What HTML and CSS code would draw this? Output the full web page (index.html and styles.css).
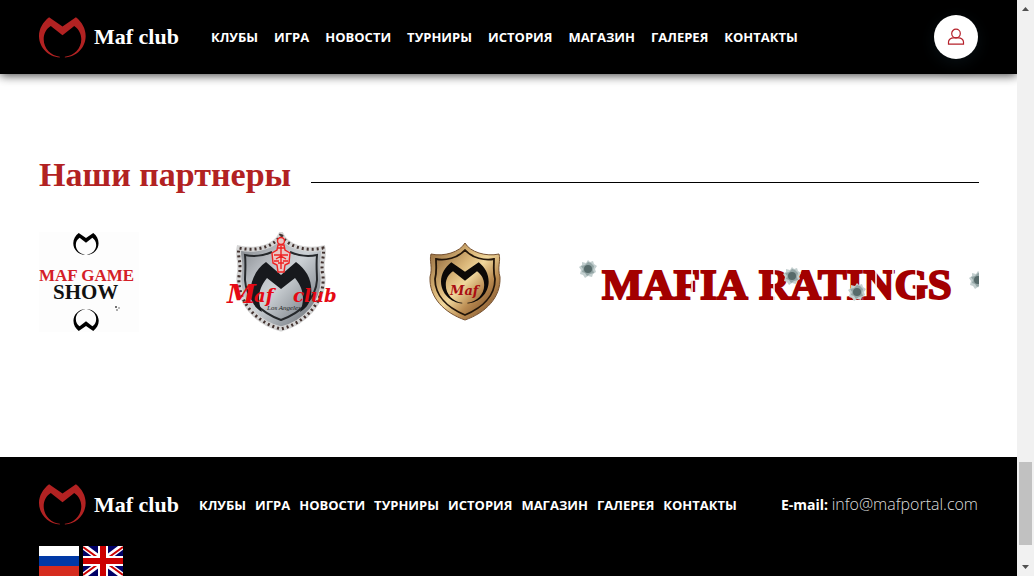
FILE: index.html
```html
<!DOCTYPE html>
<html lang="ru">
<head>
<meta charset="utf-8">
<title>Maf club</title>
<link rel="stylesheet" href="styles.css">
</head>
<body>
<svg class="defs" aria-hidden="true">
  <defs>
    <symbol id="mask" viewBox="0 0 140 121">
      <path d="M30 0L70 28L110 0C128 14 139 34 139 56C139 90 112 118 77 120V118C104 115 126 94 126 66C126 49 118 35 105 26L70 54L35 26C21 35 14 49 14 66C14 94 36 115 62 118V120C28 118 0 90 0 56C0 34 12 14 30 0Z"/>
    </symbol>
    <symbol id="hole" viewBox="0 0 18 18">
      <path d="M9 0L11 2L14 1L15 4L18 6L16 9L17 12L14 14L13 17L9 16L6 18L4 15L1 14L2 10L0 7L3 5L3 2L7 3Z" fill="#c3cfcf"/>
      <path d="M9 2L12 3L15 6L14 10L15 13L11 14L8 16L6 13L3 12L4 9L2 6L6 5Z" fill="#93a5a5"/>
      <circle cx="9" cy="9" r="4" fill="#566a6a"/>
    </symbol>
    <linearGradient id="steel" x1="0" y1="0" x2="1" y2="1">
      <stop offset="0" stop-color="#73777c"/><stop offset=".3" stop-color="#b5b9be"/><stop offset=".5" stop-color="#cdd2d6"/><stop offset=".75" stop-color="#92989e"/><stop offset="1" stop-color="#55585c"/>
    </linearGradient>
    <linearGradient id="gold" x1="0" y1="0" x2="1" y2="1">
      <stop offset="0" stop-color="#8a6238"/><stop offset=".35" stop-color="#d9b577"/><stop offset=".5" stop-color="#f0d79c"/><stop offset=".7" stop-color="#b98a50"/><stop offset="1" stop-color="#6b4020"/>
    </linearGradient>
  </defs>
</svg>
<div class="page">
  <header class="header">
    <a class="brand" href="#"><svg class="brand-mark" aria-hidden="true"><use href="#mask"/></svg><span>Maf club</span></a>
    <nav class="nav">
      <a href="#">КЛУБЫ</a><a href="#">ИГРА</a><a href="#">НОВОСТИ</a><a href="#">ТУРНИРЫ</a><a href="#">ИСТОРИЯ</a><a href="#">МАГАЗИН</a><a href="#">ГАЛЕРЕЯ</a><a href="#">КОНТАКТЫ</a>
    </nav>
    <button class="account" type="button" aria-label="Профиль">
      <svg width="18" height="18" viewBox="0 0 18 18" fill="none" stroke="#b5202a" stroke-width="1.2"><circle cx="9" cy="5.5" r="4.3"/><path d="M1.5 16.2V14C1.500 11.500 4 9.800 6.500 9.800H11.500C14 9.800 16.500 11.500 16.500 14V16.200Z"/></svg>
    </button>
  </header>
  <main class="partners">
    <div class="title-row"><h2>Наши партнеры</h2><span class="rule"></span></div>
    <div class="logos">
      <a href="#" aria-label="Maf Game Show"><svg width="100" height="100" viewBox="0 0 100 100">
        <rect width="100" height="100" fill="#fdfdfd"/>
        <use href="#mask" x="34" y="1" width="26" height="22"/>
        <g transform="rotate(180 47 88)"><use href="#mask" x="34" y="77" width="26" height="22"/></g>
        <text class="game" x="0" y="49">MAF GAME</text>
        <text class="show" x="14" y="67">SHOW</text>
        <g fill="#444"><circle cx="77" cy="75" r="1"/><circle cx="80" cy="76" r=".7"/><circle cx="78" cy="78" r=".8"/></g>
      </svg></a>
      <a href="#" aria-label="Maf club Los Angeles"><svg width="140" height="100" viewBox="0 0 140 100">
        <path d="M70 2C65 14 47 20 28 16C26 25 31 30 28 44C26 70 46 91 70 97C94 91 114 70 112 44C109 30 114 25 112 16C93 20 75 14 70 2Z" fill="url(#steel)" stroke="#d5d5d5" stroke-width="5"/>
        <path d="M70 2C65 14 47 20 28 16C26 25 31 30 28 44C26 70 46 91 70 97C94 91 114 70 112 44C109 30 114 25 112 16C93 20 75 14 70 2Z" fill="none" stroke="#42322f" stroke-width="3" stroke-dasharray="2 3"/>
        <path d="M61 20C52 24 42 25 34 23C35 34 34 41 34 48C35 67 51 81 70 88C89 81 105 67 106 48C106 41 105 34 106 23C98 25 88 24 79 20" fill="none" stroke="#25282b" stroke-width="2"/>
        <path d="M55 30L70 43L85 30C96 38 102 49 100 65C98 73 94 77 89 80C94 68 93 57 84 46L70 57L56 46C47 57 46 68 51 80C44 76 40 70 39 60C40 48 45 37 55 30Z" fill="#17191d"/>
        <g fill="#e9c8c5" stroke="#e22" stroke-width="1.400"><circle cx="70" cy="9" r="3.500"/><path d="M67 13H73L74 18L79 21L78 31L74 33L73 40H67L66 33L62 31L61 21L66 18Z"/><path d="M67 16H73M63 23H77M65 27L70 24L75 27M67 31H73M70 14V37M63 29L68 29M72 29L77 29" fill="none"/></g>
        <text class="script big" x="16" y="71">M</text>
        <text class="script word" x="43" y="70">af</text><text class="script word" x="82" y="70">club</text>
        <text class="city" x="56" y="78">Los Angeles</text>
      </svg></a>
      <a href="#" aria-label="Maf"><svg width="84" height="100" viewBox="0 0 84 100">
        <path d="M42 11C37 20 21 25 8 22C6 29 10 35 7 45C6 66 22 81 42 88C62 81 78 66 77 45C74 35 78 29 76 22C63 25 47 20 42 11Z" fill="url(#gold)" stroke="#75502f"/>
        <path d="M42 18C35 26 22 29 13 27C13 35 14 40 12 47C12 64 25 76 42 83C59 76 72 64 72 47C70 40 71 35 71 27C62 29 49 26 42 18Z" fill="url(#gold)" stroke="#221509" stroke-width="1.800"/>
        <use href="#mask" x="18" y="30" width="48" height="42" fill="#0c0907"/>
        <text class="script small" x="27" y="63">Maf</text>
      </svg></a>
      <a href="#" aria-label="Mafia Ratings"><svg width="400" height="100" viewBox="0 0 400 100">
        <text class="stencil" x="23" y="67">MAFIA</text><text class="stencil" x="180" y="67">RATINGS</text>
        <path d="M113 36V68M195 36V68M297 36V68M314 36V68M337 36V68" stroke="#fff" stroke-width="1.500"/>
        <use href="#hole" x="0" y="28" width="18" height="18"/><use href="#hole" x="204" y="35" width="18" height="18"/><use href="#hole" x="269" y="51" width="18" height="18"/><use href="#hole" x="390" y="39" width="18" height="18"/>
      </svg></a>
    </div>
  </main>
  <footer class="footer">
    <div class="footer-row">
      <a class="brand" href="#"><svg class="brand-mark" aria-hidden="true"><use href="#mask"/></svg><span>Maf club</span></a>
      <nav class="nav">
        <a href="#">КЛУБЫ</a><a href="#">ИГРА</a><a href="#">НОВОСТИ</a><a href="#">ТУРНИРЫ</a><a href="#">ИСТОРИЯ</a><a href="#">МАГАЗИН</a><a href="#">ГАЛЕРЕЯ</a><a href="#">КОНТАКТЫ</a>
      </nav>
      <p class="mail"><b>E-mail:</b> <a href="mailto:info@mafportal.com">info@mafportal.com</a></p>
    </div>
    <div class="langs">
      <a href="#" aria-label="Русский"><svg width="40" height="30"><path fill="#fff" d="M0 0h40v10H0z"/><path fill="#0039a6" d="M0 10h40v10H0z"/><path fill="#d52b1e" d="M0 20h40v10H0z"/></svg></a>
      <a href="#" aria-label="English"><svg width="40" height="30" viewBox="0 0 40 30"><path fill="#006" d="M0 0h40v30H0z"/><path d="M0 0L40 30M40 0L0 30" stroke="#fff" stroke-width="6"/><path d="M0 1L18 14M22 14L40 1M18 16L0 29M22 16L40 29" stroke="#c00" stroke-width="2"/><path d="M20 0V30M0 15H40" stroke="#fff" stroke-width="10"/><path d="M20 0V30M0 15H40" stroke="#c00" stroke-width="6"/></svg></a>
    </div>
  </footer>
</div>
<div class="scrollbar" aria-hidden="true">
  <svg width="17" height="17"><path d="M5 11L8.500 7L12 11Z" fill="#505050"/></svg>
  <span class="thumb"></span>
  <svg width="17" height="17"><path d="M5 6L8.500 10L12 6Z" fill="#505050"/></svg>
</div>
</body>
</html>
```
FILE: styles.css
```css
* { box-sizing: border-box; }
body {
  margin: 0;
  min-height: 100vh;
  display: grid;
  grid-template-columns: 1fr 17px;
  background: #fff;
  font-family: "Open Sans", "Noto Sans", sans-serif;
}
a { color: inherit; text-decoration: none; }
svg { display: block; }
h2, p { margin: 0; }
.defs { position: absolute; width: 0; height: 0; }
.page { display: flex; flex-direction: column; min-width: 0; }

.header {
  display: flex;
  align-items: center;
  height: 74px;
  padding: 0 39px;
  background: #000;
  color: #fff;
  box-shadow: 0 1px 10px rgba(0, 0, 0, .8);
}
.brand {
  display: flex;
  align-items: center;
  gap: 8px;
  font: 700 22px/28px "Liberation Serif", serif;
  white-space: nowrap;
}
.brand-mark { width: 47px; height: 41px; fill: #b22222; }
.nav {
  display: flex;
  gap: 16px;
  margin-left: 32px;
  font-size: 13px;
  line-height: 20px;
  font-weight: 700;
  white-space: nowrap;
}
.account {
  display: grid;
  place-items: center;
  width: 44px;
  height: 44px;
  margin-left: auto;
  padding: 0;
  border: 0;
  border-radius: 50%;
  background: #fff;
  box-shadow: 0 4px 16px rgba(20, 40, 50, .4);
}

.partners { padding: 77px 38px 125px 39px; }
.title-row { display: flex; align-items: center; gap: 20px; }
.title-row h2 {
  font: 700 34px/48px "Liberation Serif", serif;
  color: #b22222;
  white-space: nowrap;
}
.rule { flex: 1; height: 1px; margin-top: 14px; background: #000; }
.logos {
  display: flex;
  justify-content: space-between;
  margin-top: 33px;
}
.game { font: 700 17px/17px "Liberation Serif", serif; fill: #d42027; }
.show { font: 700 21px/21px "Liberation Serif", serif; fill: #111; }
.script { font-family: "DejaVu Serif", serif; font-weight: 700; font-style: italic; fill: #e50914; }
.big { font-size: 26px; }
.word { font-size: 18px; }
.small { font-size: 13px; fill: #a90d12; }
.city { font: italic 7px "Liberation Serif", serif; fill: #222; }
.stencil { font: 700 43px "Liberation Serif", serif; fill: #a30000; stroke: #a30000; stroke-width: 2px; }

.footer { flex: 1; padding: 27px 39px 0; background: #000; color: #fff; }
.footer-row { display: flex; align-items: center; }
.footer .nav { gap: 9px; margin-left: 20px; }
.mail { margin-left: auto; font-size: 14px; line-height: 24px; white-space: nowrap; }
.mail a { font-size: 16px; font-weight: 300; color: #ddd; }
.langs { display: flex; gap: 4px; margin-top: 21px; }

.scrollbar { display: flex; flex-direction: column; align-items: center; background: #f1f1f1; }
.thumb { width: 13px; height: 83px; margin-top: auto; margin-bottom: 14px; background: #c1c1c1; }
```
